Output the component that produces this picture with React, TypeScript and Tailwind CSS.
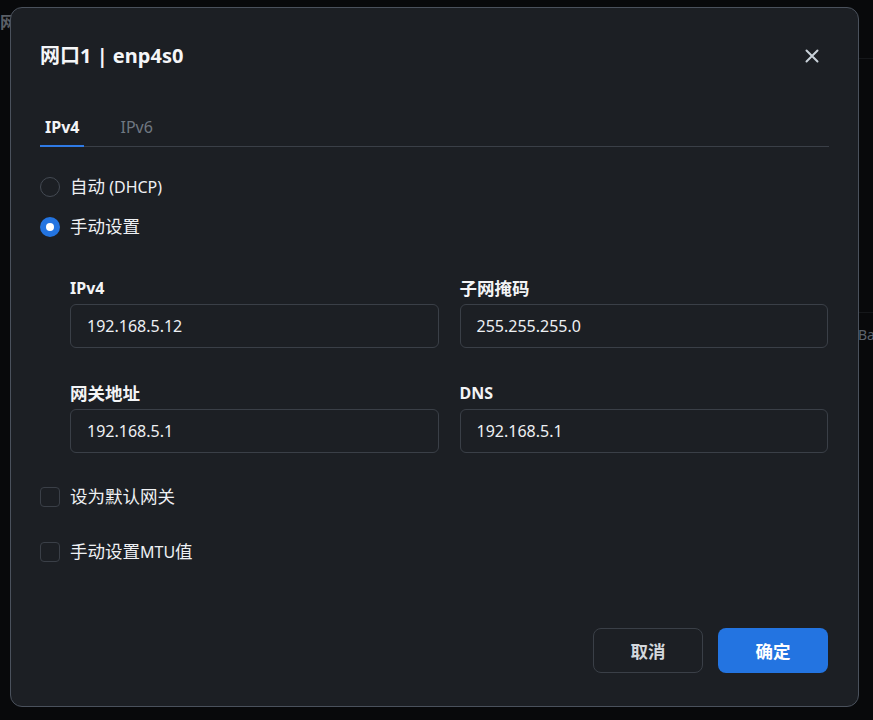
import React from "react";

const font = { fontFamily: '"Noto Sans", "Noto Sans CJK SC", sans-serif' };

function C({ children }: { children: React.ReactNode }) {
  return <span className="text-[17.5px] leading-[16px]">{children}</span>;
}

function Field({ label, value }: { label: React.ReactNode; value: string }) {
  return (
    <div className="flex flex-col">
      <div className="h-[24px] flex items-center text-[16px] leading-[24px] font-bold text-[#f3f4f6]">{label}</div>
      <div className="mt-[4px] h-[44px] rounded-[6px] border border-[#3a3f47] flex items-center px-[16px] text-[16px] text-[#eef0f3]">
        {value}
      </div>
    </div>
  );
}

export default function App() {
  return (
    <div className="relative w-[873px] h-[720px] bg-[#08090b] overflow-hidden" style={font}>
      {/* faint background content */}
      <div className="absolute left-0 top-[10px] text-[16px] font-bold text-[#5a5f66]">网</div>
      <div className="absolute left-[858px] right-0 top-[58px] h-px bg-[#15171a]" />
      <div className="absolute left-[858px] top-[324px] text-[14px] text-[#5c636c]">Ba</div>
      <div className="absolute left-[858px] right-0 top-[312px] h-px bg-[#15171a]" />

      <div className="absolute left-[10px] top-[7px] w-[849px] h-[700px] rounded-[12px] border border-[#4a515c] bg-[#1c1f24] px-[29px] pt-[34px] pb-[33px] flex flex-col">
        <div className="flex items-center justify-between h-[28px]">
          <div className="text-[20px] leading-[28px] font-bold text-[#f5f6f8]">网口1 | enp4s0</div>
          <svg width="16" height="16" viewBox="0 0 16 16" className="mr-[9px]">
            <path d="M2.5 2.5 L13.5 13.5 M13.5 2.5 L2.5 13.5" stroke="#c9d1d9" strokeWidth="2" strokeLinecap="round" />
          </svg>
        </div>

        <div className="mt-[45px] flex border-b border-[#3a3f47]">
          <div className="px-[5px] pb-[6px] border-b-2 border-[#2f7ae5] -mb-px text-[16px] leading-[24px] font-bold text-[#f3f4f6]">IPv4</div>
          <div className="ml-[31px] px-[5px] pb-[6px] text-[16px] leading-[24px] text-[#6f7781]">IPv6</div>
        </div>

        <div className="mt-[28px] flex items-center h-[24px]">
          <div className="w-[20px] h-[20px] rounded-full border-[1.5px] border-[#444a53]" />
          <div className="ml-[10px] text-[16px] leading-[24px] text-[#eef0f3]"><C>自动</C> (DHCP)</div>
        </div>
        <div className="mt-[16px] flex items-center h-[24px]">
          <div className="w-[20px] h-[20px] rounded-full bg-[#2374e1] flex items-center justify-center">
            <div className="w-[8px] h-[8px] rounded-full bg-white" />
          </div>
          <div className="ml-[10px] text-[16px] leading-[24px] text-[#eef0f3]"><C>手动设置</C></div>
        </div>

        <div className="mt-[37px] pl-[30px] pr-px grid grid-cols-2 gap-x-[21px] gap-y-[33px]">
          <Field label="IPv4" value="192.168.5.12" />
          <Field label={<C>子网掩码</C>} value="255.255.255.0" />
          <Field label={<C>网关地址</C>} value="192.168.5.1" />
          <Field label="DNS" value="192.168.5.1" />
        </div>

        <div className="mt-[32px] flex items-center h-[24px]">
          <div className="w-[20px] h-[20px] rounded-[4px] border-[1.5px] border-[#3a3f47]" />
          <div className="ml-[10px] text-[16px] leading-[24px] text-[#eef0f3]"><C>设为默认网关</C></div>
        </div>
        <div className="mt-[31px] flex items-center h-[24px]">
          <div className="w-[20px] h-[20px] rounded-[4px] border-[1.5px] border-[#3a3f47]" />
          <div className="ml-[10px] text-[16px] leading-[24px] text-[#eef0f3]"><C>手动设置</C>MTU<C>值</C></div>
        </div>

        <div className="mt-auto flex justify-end gap-[15px] pr-px">
          <div className="w-[110px] h-[45px] rounded-[8px] border border-[#3a3f47] flex items-center justify-center text-[16px] font-bold text-[#d3d7dc]"><C>取消</C></div>
          <div className="w-[110px] h-[45px] rounded-[8px] bg-[#2374e1] flex items-center justify-center text-[16px] font-bold text-white"><C>确定</C></div>
        </div>
      </div>
    </div>
  );
}
